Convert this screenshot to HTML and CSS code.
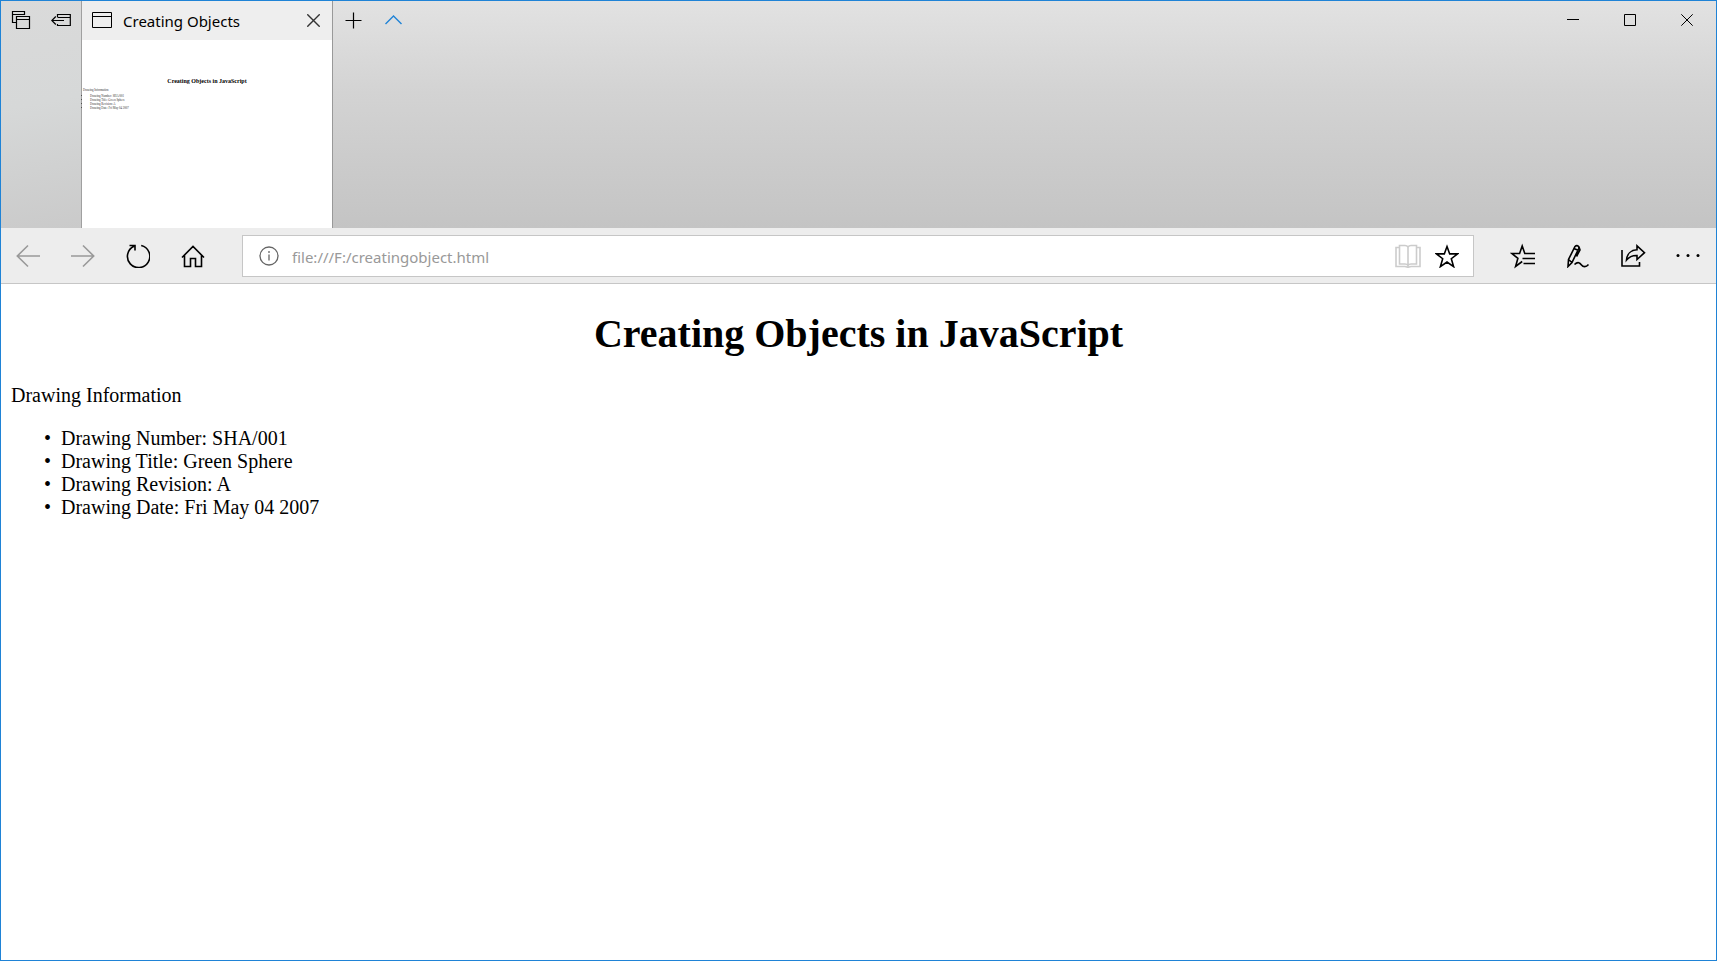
FILE: index.html
```html
<!DOCTYPE html>
<html lang="en">
<head>
<meta charset="utf-8">
<title>Creating Objects</title>
<link rel="stylesheet" href="styles.css">
</head>
<body>
<div class="window">
  <header class="tabstrip">
    <div class="tab-tools">
      <button class="tool" aria-label="Tabs you've set aside"><svg width="20" height="20" viewBox="0 0 20 20"><path d="M5 12.500H1.500V1.500H13.500V5M1.500 4.500H13.500M5.500 6.500H18.500V18.500H5.500ZM5.500 9.500H18.500"/></svg></button>
      <button class="tool" aria-label="Set these tabs aside"><svg width="20" height="20" viewBox="0 0 20 20"><path d="M6.500 7V4.500H19.300V15.500H6.500V14M6.500 7.500H19.300M.8 10.500H13M4.800 6.500L.8 10.500L4.800 14.500"/></svg></button>
    </div>
    <div class="tab">
      <div class="tab-head">
        <svg width="20" height="17" viewBox="0 0 20 17"><path d="M.5 .5H19.500V15.500H.5ZM.5 4.500H19.500"/></svg>
        <span class="tab-title">Creating Objects</span>
        <button class="tab-close" aria-label="Close tab"><svg width="13" height="13" viewBox="0 0 13 13"><path d="M.3 .3L12.700 12.700M12.700 .3L.3 12.700"/></svg></button>
      </div>
      <div class="preview">
        <p class="preview-heading">Creating Objects in JavaScript</p>
        <p class="preview-text">Drawing Information</p>
        <ul class="preview-list">
          <li>Drawing Number: SHA/001</li>
          <li>Drawing Title: Green Sphere</li>
          <li>Drawing Revision: A</li>
          <li>Drawing Date: Fri May 04 2007</li>
        </ul>
      </div>
    </div>
    <div class="tab-actions">
      <button class="tool" aria-label="New tab"><svg width="17" height="17" viewBox="0 0 17 17"><path d="M.5 8.500H16.500M8.500 .5V16.500"/></svg></button>
      <button class="tool accent" aria-label="Hide tab previews"><svg width="17" height="17" viewBox="0 0 17 17"><path d="M.5 12L8.500 4L16.500 12"/></svg></button>
    </div>
    <div class="window-controls">
      <button class="control" aria-label="Minimize"><svg width="12" height="12" viewBox="0 0 12 12"><path d="M0 5.500H12"/></svg></button>
      <button class="control" aria-label="Maximize"><svg width="12" height="12" viewBox="0 0 12 12"><path d="M.5 .5H11.500V11.500H.5Z"/></svg></button>
      <button class="control" aria-label="Close"><svg width="12" height="12" viewBox="0 0 12 12"><path d="M.3 .3L11.700 11.700M11.700 .3L.3 11.700"/></svg></button>
    </div>
  </header>

  <nav class="toolbar" aria-label="Navigation">
    <div class="nav-buttons">
      <button class="nav muted" aria-label="Back" disabled><svg width="24" height="24" viewBox="0 0 24 24"><path d="M24 12H1M12 1.500L1.300 12L12 22.500"/></svg></button>
      <button class="nav muted" aria-label="Forward" disabled><svg width="24" height="24" viewBox="0 0 24 24"><path d="M0 12H23M12 1.500L22.700 12L12 22.500"/></svg></button>
      <button class="nav" aria-label="Refresh"><svg width="24" height="24" viewBox="0 0 24 24"><path d="M15.200 1.500A11.200 11.200 0 1 1 8 2.200M3.500 1.500H9V6.500"/></svg></button>
      <button class="nav" aria-label="Home"><svg width="24" height="24" viewBox="0 0 24 24"><path d="M1 13.500L12 2.500L23 13.500M3.500 11.500V22.500H9.500V14.500H14.500V22.500H20.500V11.500"/></svg></button>
    </div>
    <form class="address">
      <svg class="info" width="20" height="20" viewBox="0 0 20 20"><circle cx="10" cy="10" r="9"/><path d="M10 8.500V14.500M10 5V7"/></svg>
      <input class="url" type="text" aria-label="Address" value="file:///F:/creatingobject.html">
      <button class="reading" type="button" aria-label="Reading view" disabled><svg width="26" height="24" viewBox="0 0 26 24"><path d="M4 3.500H1V22.500H10L13 23.300L16 22.500H25V3.500H22M4.500 1.500H10Q12 1.500 13 3Q14 1.500 16 1.500H21.500V20H16Q14 20 13 21.500Q12 20 10 20H4.500ZM13 3V21.500"/></svg></button>
      <button class="star" type="button" aria-label="Add to favorites"><svg width="24" height="24" viewBox="0 0 24 24"><path d="M12 2.500L14.700 9.900H22.600L16.300 14.700L18.600 22.600L12 18L5.400 22.600L7.700 14.700L1.400 9.900H9.300Z"/></svg></button>
    </form>
    <div class="hub-buttons">
      <button class="nav" aria-label="Hub"><svg width="26" height="26" viewBox="0 0 26 26"><path d="M25 10.500H14.800L12.200 3L9.600 10.500H1.800L7.900 15.300L5.600 23.500L12.200 18.500M12.500 15.500H25M13.500 20.500H25"/></svg></button>
      <button class="nav" aria-label="Add notes"><svg width="24" height="24" viewBox="0 0 24 24"><path d="M2 22.500L2.500 15.500L9 2.500Q11 .5 13 3L12.500 5L6 18.500ZM2.500 15.500L6 18.500M8 4.500L12.500 6.500M13 3L14 6L10.500 12.500M8.500 20.500C12 17 14 19 15.500 21S20 23.500 22.500 20.500"/></svg></button>
      <button class="nav" aria-label="Share"><svg width="26" height="24" viewBox="0 0 26 24"><path d="M2 6V22H19.500V18M6.500 16C7 10 11 6 17 5.800V1.800L24.500 8.700L17 15.500V11.500C12 11.300 9 13 6.500 16Z"/></svg></button>
      <button class="nav" aria-label="More"><svg class="dots" width="24" height="24" viewBox="0 0 24 24"><circle cx="2" cy="11.500" r="1.500"/><circle cx="12" cy="11.500" r="1.500"/><circle cx="22" cy="11.500" r="1.500"/></svg></button>
    </div>
  </nav>

  <main class="page">
    <h1>Creating Objects in JavaScript</h1>
    <p>Drawing Information</p>
    <ul>
      <li>Drawing Number: SHA/001</li>
      <li>Drawing Title: Green Sphere</li>
      <li>Drawing Revision: A</li>
      <li>Drawing Date: Fri May 04 2007</li>
    </ul>
  </main>
</div>
</body>
</html>
```
FILE: styles.css
```css
* { box-sizing: border-box; }
body { margin: 0; background: #fff; }
button {
  display: flex; align-items: center; justify-content: center;
  margin: 0; padding: 0; border: 0; background: none; color: #000;
}
svg { display: block; flex: none; fill: none; stroke: currentColor; }

.window {
  display: flex; flex-direction: column;
  min-height: 100vh;
  border: 1px solid #1f83d6;
  font-family: "Noto Sans", "Open Sans", sans-serif;
}

.tabstrip {
  display: flex; align-items: flex-start;
  background: linear-gradient(#e2e2e2, #d3d3d3 40%, #c4c4c4);
}
.tab-tools {
  display: flex; align-self: stretch; align-items: flex-start;
  width: 81px;
  border-right: 1px solid #a0a0a0;
  background: linear-gradient(170deg, #dadada, #d6d8d8 45%, #cacaca);
}
.tool { width: 40px; height: 38px; stroke-width: 1.2; }
.tab { width: 251px; border-right: 1px solid #999; }
.tab-head {
  display: flex; align-items: center; gap: 11px;
  height: 39px; padding: 0 12px 0 10px;
  background: #eee;
}
.tab-title { flex: 1; font-size: 15px; line-height: 22px; white-space: nowrap; }
.tab-close { color: #333; stroke-width: 1.4; }
.preview {
  height: 188px; padding: 38px 1px 0;
  background: #fff;
  font-family: "Liberation Serif", serif;
}
.preview-heading { margin: 0 0 3px; text-align: center; font-size: 6px; line-height: 7px; font-weight: bold; }
.preview-text { margin: 0; color: #333; font-size: 3px; line-height: 4px; }
.preview-list { margin: 2px 0 0; padding: 0 0 0 7px; color: #333; font-size: 3px; line-height: 4px; }
.tab-actions { display: flex; }
.accent { color: #1f83d6; stroke-width: 1.4; }
.window-controls { display: flex; margin-left: auto; padding-right: 1px; }
.control { width: 57px; height: 38px; }

.toolbar {
  display: flex; align-items: center;
  height: 56px;
  background: #ededed;
  border-bottom: 1px solid #c6c6c6;
}
.nav-buttons { display: flex; width: 241px; }
.nav { width: 55px; height: 55px; stroke-width: 1.6; }
.nav-buttons .nav:first-child { width: 54px; }
.muted { color: #999; }
.address {
  display: flex; flex: 1; align-items: center;
  height: 42px; padding: 0 14px 0 16px;
  background: #fff;
  border: 1px solid #c6c6c6;
}
.info { color: #666; stroke-width: 1.3; }
.url {
  flex: 1; min-width: 0; height: 38px; margin-left: 13px; padding: 2px 0 0;
  border: 0; outline: 0; background: none;
  color: #999; font-family: inherit; font-size: 15px;
}
.reading { color: #ccc; stroke-width: 1.6; }
.star { margin-left: 14px; stroke-width: 1.6; }
.hub-buttons { display: flex; margin-left: 21px; padding-right: 1px; }
.dots { fill: currentColor; stroke: none; }

.page { flex: 1; padding: 11px 10px 10px; font: 20px/23px "Liberation Serif", serif; }
h1 { margin: 16px 0 27px; text-align: center; font-size: 40px; line-height: 46px; }
.page p { margin: 0 0 20px; }
.page ul { margin: 0; padding-left: 50px; list-style-type: "•\a0\a0"; }
```
